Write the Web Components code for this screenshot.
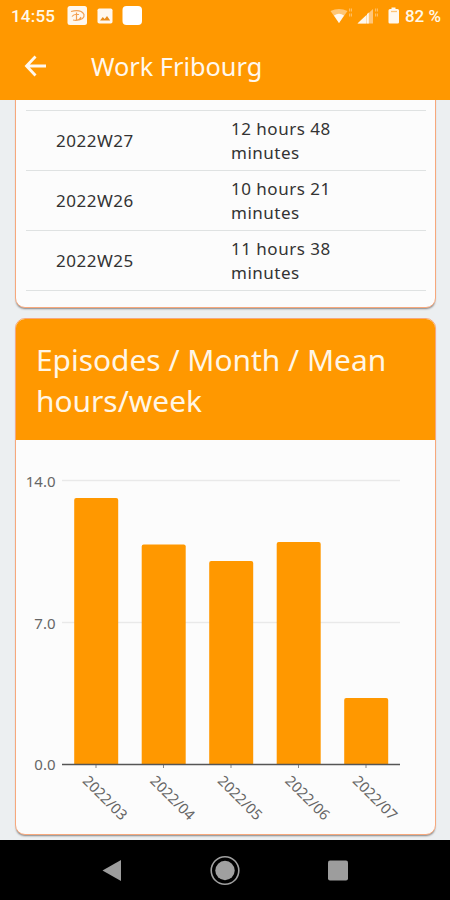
<!DOCTYPE html>
<html lang="en">
<head>
<meta charset="utf-8">
<title>Work Fribourg</title>
<style>
html,body{margin:0;padding:0;height:900px;overflow:hidden;background:#eceff1;font-family:"Noto Sans",sans-serif}
</style>
</head>
<body>
<work-stats></work-stats>
<script>
const define = (name, html, setup) => customElements.define(name, class extends HTMLElement {
  constructor() {
    super();
    this.attachShadow({mode: 'open'}).innerHTML = html;
  }
  connectedCallback() { if (setup) setup(this, this.shadowRoot); }
});

define('status-bar', `
<style>
:host{display:flex;align-items:center;height:32px;box-sizing:border-box;padding:0 9px 0 11px;color:#fff8ea;background:#ff9800;font:500 17px/32px Roboto,sans-serif}
svg{display:block;flex:none}
.time{width:56px;letter-spacing:.2px}
.gap{flex:1}
.pct{margin-left:4.500px;white-space:nowrap}
</style>
<span class="time">14:55</span>
<svg width="78" height="32" viewBox="67 0 78 32">
  <rect x="67.5" y="6" width="19.5" height="19" rx="2.5" fill="#fff8ef"/>
  <path d="M71 11.5q10-2.500 13 3q1 5-8 6M72 16.500q2-3 7-2M76.500 12.500v7.500M73 20q6 1.500 8-3" fill="none" stroke="#f3a052" stroke-width="1.200"/>
  <rect x="97.500" y="8.500" width="15" height="15" rx="1.800" fill="#fff8ef"/>
  <path d="M100 20.500l2.800-3.500 1.900 2 2.300-3 3.200 4.500z" fill="#e98c1b"/>
  <rect x="122.500" y="6" width="19.500" height="19" rx="4" fill="#fff"/>
</svg>
<span class="gap"></span>
<svg width="70" height="32" viewBox="330 0 70 32">
  <path d="M330.500 11q8.500-4 17 0L339 23z" fill="#ffc675"/>
  <path d="M334 15.500q5-3.500 10 0L339 23z" fill="#fff8ef"/>
  <path d="M349 10h3M349 15h3" stroke="#ffbd60" stroke-width="3" stroke-dasharray="1.300 .7"/>
  <path d="M357.500 23.500L373 9v14.500z" fill="#ffc67a"/>
  <path d="M357.500 23.500l9-8.500v8.500zM367 23.500V14l1.800-1.500v11z" fill="#fff8ef"/>
  <path d="M375 10h3M375 15h3" stroke="#ffbd60" stroke-width="3" stroke-dasharray="1.300 .7"/>
  <path d="M388.500 10.500q0-1.500 1.500-1.500h1.500V7.500h4V9h2q1.500 0 1.500 1.500v11.700q0 1.300-1.300 1.300h-7.900q-1.300 0-1.300-1.300z" fill="#fff8ef"/>
  <path d="M391 11.500h6" stroke="#ffc477" stroke-width="1.300"/>
</svg>
<span class="pct">82 %</span>`);

define('app-bar', `
<style>
:host{display:flex;align-items:center;height:68px;background:#ff9800;color:#fff8ee}
svg{display:block;margin-left:24px;flex:none}
h1{margin:0 0 0 43px;font-size:25.3px;line-height:34px;font-weight:400;white-space:nowrap}
</style>
<svg width="24" height="24" viewBox="0 0 24 24"><path d="M11.500 2.500L2.500 12l9 9.500M3 12h19" fill="none" stroke="#fff8ee" stroke-width="2.800"/></svg>
<h1><slot></slot></h1>`);

define('stat-card', `
<style>
:host{display:block;box-sizing:border-box;border:1px solid #f7a87c;border-radius:10px;background:#fcfcfc;box-shadow:0 2px 2px -1.500px rgba(0,0,0,.45);overflow:hidden}
::slotted([slot=title]){display:block;box-sizing:border-box;height:121px;padding:20px 20px 0;background:#ff9800;color:#fff6e6;font-size:29.9px;line-height:41px}
</style>
<slot name="title"></slot><slot></slot>`);

define('week-row', `
<style>
:host{display:grid;grid-template-columns:175px 1fr;align-items:center;box-sizing:border-box;height:60px;margin:0 9px 0 10px;padding-left:30px;border-bottom:1px solid #dfe2e2;color:#333;font-size:17px;line-height:24px;letter-spacing:.5px}
.time{width:120px}
</style>
<span><slot name="week"></slot></span><span class="time"><slot></slot></span>`);

define('bar-chart', `
<style>
:host{display:block;height:394px}
svg{display:block;width:419px;height:394px}
text{font-family:"Noto Sans",sans-serif;fill:#666}
</style>
<svg viewBox="16 440 419 394"></svg>`, (host, root) => {
  const bars = JSON.parse(host.getAttribute('bars'));
  let s = '';
  for (const [y, label] of [[480.5, '14.0'], [622.5, '7.0']])
    s += `<path d="M62 ${y}H400" stroke="#e9e9e9" stroke-width="1.500"/><text x="55.500" y="${y + 6}" font-size="15" text-anchor="end">${label}</text>`;
  s += `<text x="55.500" y="770" font-size="15" text-anchor="end">0.0</text>`;
  bars.forEach(([label, top], i) => {
    const x = 74.2 + i * 67.5;
    s += `<path d="M${x} 764V${top + 2}q0-2 2-2h40q2 0 2 2V764z" fill="#ff9800"/>
      <path d="M${x + 21.8} 764v4" stroke="#888"/>
      <text transform="translate(${x + 7.6} 781.800) rotate(45)" font-size="14.600" fill="#555">${label}</text>`;
  });
  s += '<path d="M62 764.500H400" stroke="#555" stroke-width="1.300"/>';
  root.querySelector('svg').innerHTML = s;
});

define('nav-bar', `
<style>
:host{display:flex;align-items:center;justify-content:space-between;height:60px;box-sizing:border-box;padding:0 101px;background:#000}
svg{display:block}
</style>
<svg width="22" height="24" viewBox="0 0 22 24"><path d="M1.500 12.500L20 2v21z" fill="#9d9d9d"/></svg>
<svg width="32" height="32" viewBox="0 0 32 32"><circle cx="16" cy="16.500" r="13.800" fill="none" stroke="#a0a0a0" stroke-width="1.600"/><circle cx="16" cy="16.500" r="9.700" fill="#a0a0a0"/></svg>
<svg width="22" height="22" viewBox="0 0 22 22"><rect x="1" y="1.500" width="20" height="20" rx="2" fill="#9d9d9d"/></svg>`);

define('work-stats', `
<style>
:host{display:flex;flex-direction:column;width:450px;height:900px}
main{flex:1;display:flex;flex-direction:column;justify-content:flex-end;gap:10px;min-height:0;box-sizing:border-box;padding:0 14px 5px 15px;overflow:hidden;background:#eceff1}
stat-card{flex:none}
.weeks{padding-bottom:16px}
.chart{height:517px}
</style>
<status-bar></status-bar>
<app-bar>Work Fribourg</app-bar>
<main>
  <stat-card class="weeks">
    <week-row></week-row>
    <week-row><span slot="week">2022W27</span>12 hours 48 minutes</week-row>
    <week-row><span slot="week">2022W26</span>10 hours 21 minutes</week-row>
    <week-row><span slot="week">2022W25</span>11 hours 38 minutes</week-row>
  </stat-card>
  <stat-card class="chart">
    <span slot="title">Episodes / Month / Mean hours/week</span>
    <bar-chart bars='[["2022/03",498],["2022/04",544.500],["2022/05",561],["2022/06",542],["2022/07",698]]'></bar-chart>
  </stat-card>
</main>
<nav-bar></nav-bar>`);
</script>
</body>
</html>
